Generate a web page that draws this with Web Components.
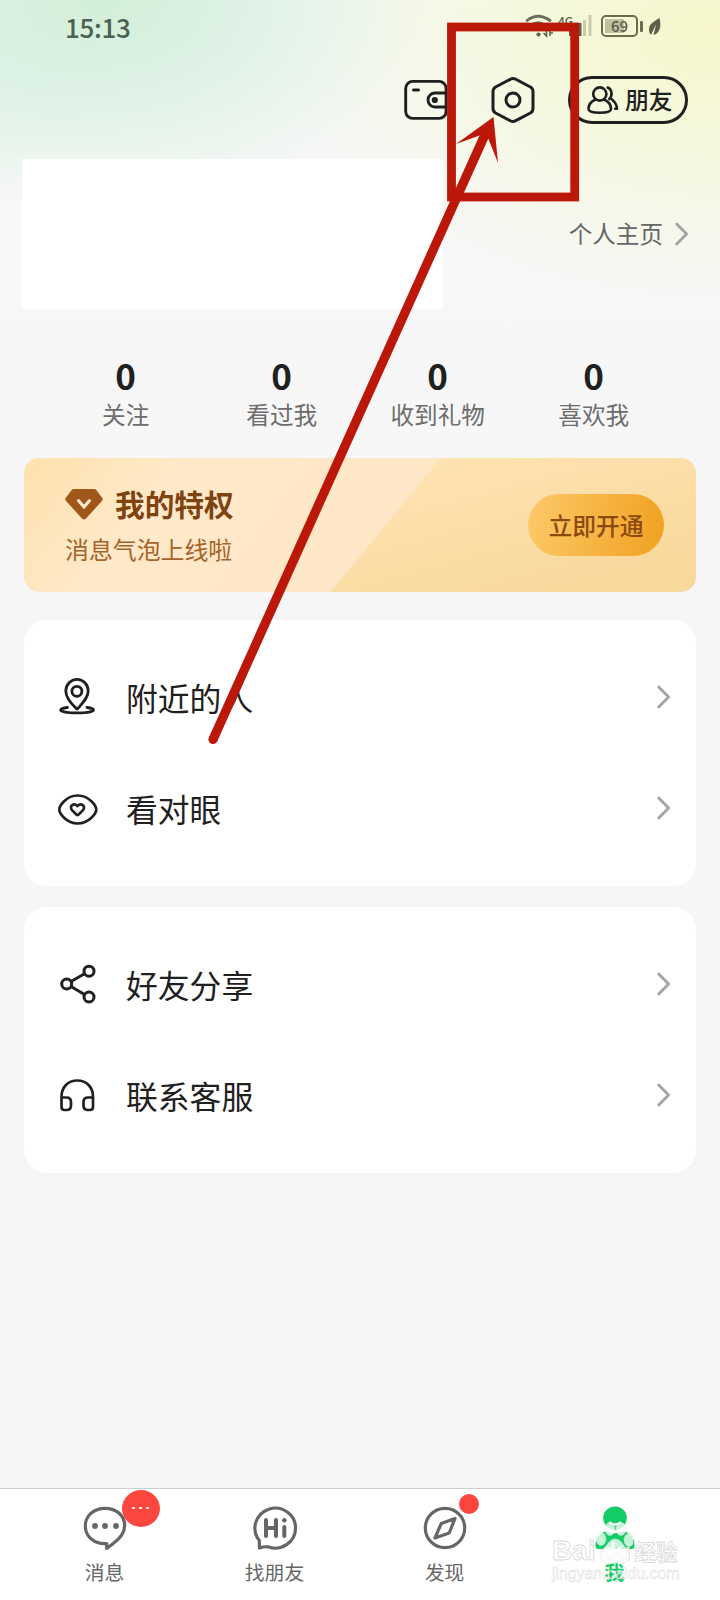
<!DOCTYPE html>
<html lang="zh-CN">
<head>
<meta charset="utf-8">
<title>我</title>
<style>
html,body{margin:0;padding:0}
body{width:720px;height:1600px;overflow:hidden;font-family:"Noto Sans CJK SC","Noto Sans",sans-serif;color:#1f2020}
</style>
</head>
<body>
<profile-page></profile-page>
<script>
const define=(name,html,setup)=>customElements.define(name,class extends HTMLElement{
  constructor(){
    super();
    const t=document.createElement('template');
    t.innerHTML=html;
    this.attachShadow({mode:'open'}).append(t.content.cloneNode(true));
  }
  connectedCallback(){ if(setup) setup(this,this.shadowRoot); }
});

const ICONS={
  wallet:[44,40,`<g fill="none" stroke="#1f2020" stroke-width="2.900" stroke-linejoin="round"><rect x="1.700" y="1.400" width="40.400" height="37" rx="7"/><path d="M42 13H31a7 7 0 0 0 0 14h11"/><path d="M9.500 10h5" stroke-width="3" stroke-linecap="round"/></g><circle cx="30.800" cy="20" r="3.100" fill="#1f2020"/>`],
  hex:[44,46,`<g fill="none" stroke="#1f2020" stroke-width="3" stroke-linejoin="round"><path d="M19.200 2.300q2.800-1.500 5.600 0L39.400 10q2.600 1.500 2.600 4.500v17q0 3-2.600 4.500l-14.600 7.700q-2.800 1.500-5.600 0L4.600 36Q2 34.500 2 31.500v-17Q2 11.500 4.600 10z"/><circle cx="22" cy="23" r="7"/></g>`],
  people:[32,28,`<g fill="none" stroke="#1f2020" stroke-width="2.600" stroke-linecap="round" stroke-linejoin="round"><ellipse cx="12.800" cy="8" rx="6.600" ry="6.600"/><path d="M8.500 13.500C4 15.500 1.500 19.500 1.500 23 1.500 26 6 26.700 12.800 26.700S24 26 24 23C24 19.500 21.600 15.500 17.100 13.500"/><path d="M20.700 1.500c4.600 2 5 8 1.600 11.500M25 13.500c2.800 2.500 5 5.500 5 9.200h-1.800"/></g>`],
  gem:[38,31,`<path d="M9 0h20q1.500 0 2.500 1.200L37.300 9q1 1.400-.2 2.800L21 29.600q-2 2-4 0L.9 11.800Q-.3 10.400.7 9L6.500 1.200Q7.500 0 9 0z" fill="#a2571a"/><path d="M13.700 11.800l5.300 6.200 5.300-6.200" fill="none" stroke="#ffeccc" stroke-width="3" stroke-linecap="square"/>`],
  pin:[40,40,`<g fill="none" stroke="#1f2020" stroke-width="2.800" stroke-linecap="round" stroke-linejoin="round"><path d="M18.300 30.600C12 24.500 7.800 19.500 7.800 13a10.700 11.200 0 0 1 22.400 0C30.200 19.500 25 24.500 19.800 30.600q-.7.700-1.500 0z"/><circle cx="18.900" cy="13.300" r="5"/><path d="M9.500 29.500C5 30 2.700 31 2.700 32c0 1.500 6.500 2.900 16.300 2.900S35.500 33.500 35.500 32c0-1-2.300-2-6.500-2.500"/></g>`],
  eye:[40,40,`<g fill="none" stroke="#1f2020" stroke-width="2.700" stroke-linejoin="round"><path d="M1.300 20.500C1.300 17 8 6.500 19.700 6.500S38.300 17 38.300 20.500C38.300 24 31.500 34.500 19.700 34.500S1.300 24 1.300 20.500z"/><path d="M18.600 25.700l-4.600-4.600c-3.200-4 2-7.700 5.500-4 3.500-3.700 8.700 0 5.500 4l-4.600 4.600q-.9.700-1.800 0z"/></g>`],
  share:[40,40,`<g fill="none" stroke="#1f2020" stroke-width="3"><circle cx="8.700" cy="19" r="5"/><circle cx="31" cy="6.200" r="5"/><circle cx="31" cy="32" r="5"/><path d="M13 16.500L26.500 8.700M13 21.500L26.500 29.500"/></g>`],
  phones:[40,40,`<g fill="none" stroke="#1f2020" stroke-width="2.700" stroke-linecap="round" stroke-linejoin="round"><path d="M3.500 31V21C3.500 11 10 4.500 19.300 4.500S35 11 35 21v10q0 3-3 3H30q-4.500 0-4.500-4.500V26q0-4.500 4.500-4.500h5M3.500 21.500H8.500q4.500 0 4.500 4.500v3.500q0 4.500-4.500 4.500H6.500q-3 0-3-3"/></g>`],
  chat:[46,46,`<path d="M23 3.300c11.500 0 19.700 7.400 19.700 17.200 0 8.400-5.700 13.800-11.700 18.300-2.800 2.200-5 3.700-6.300 4.500v-4.800C13 39.500 3.300 32 3.300 21 3.300 11 11.500 3.300 23 3.300z" fill="none" stroke="#666" stroke-width="3.200" stroke-linejoin="round"/><g fill="#666"><circle cx="13" cy="21" r="2.900"/><circle cx="23" cy="21" r="2.900"/><circle cx="34" cy="21" r="2.900"/></g>`],
  hi:[46,46,`<path d="M7.300 35.500A20.300 20 0 1 1 16 41.800Q12 41.500 7.500 43z" fill="none" stroke="#666" stroke-width="3.200" stroke-linejoin="round"/><path d="M14 15v16M24 15v16M14 23H24M32.300 22v9" stroke="#666" stroke-width="4" stroke-linecap="round"/><circle cx="32.300" cy="15.300" r="2.300" fill="#666"/>`],
  compass:[46,46,`<g fill="none" stroke="#666" stroke-width="3.200" stroke-linejoin="round"><circle cx="23" cy="23" r="19.700"/><path d="M33 13.500L19.200 18.600 13 33 27.200 28z"/></g>`],
  me:[46,46,`<g fill="#12cd66"><circle cx="23" cy="13.200" r="11.800"/><path d="M3.500 41C3.500 33 7.500 27.500 14.500 26.300q8.500 4 17 0C38.500 27.500 42.500 33 42.500 41q0 3-3 3H6.500q-3 0-3-3z"/></g><path d="M18 17.500q5 4 10 0" stroke="#fff" stroke-width="2.200" stroke-linecap="round" fill="none"/>`],
  chev:[14,24,`<path d="M1.700 1.900L11.600 12 1.700 22.100" fill="none" stroke="#a3a3a3" stroke-width="2.800" stroke-linecap="round" stroke-linejoin="round"/>`]
};
define('app-icon',`<style>:host{display:block;flex:none;line-height:0}svg{display:block;overflow:visible}</style>`,(el,root)=>{
  const [w,h,p]=ICONS[el.getAttribute('name')];
  const t=document.createElement('template');
  t.innerHTML=`<svg width="${w}" height="${h}" viewBox="0 0 ${w} ${h}">${p}</svg>`;
  root.append(t.content);
});

define('status-bar',`<style>
:host{display:flex;justify-content:space-between;box-sizing:border-box;height:54px;padding:0 59px 0 65px}
time{font-size:26px;font-weight:500;line-height:53px;letter-spacing:-.3px;color:#4c6152}
.sys{display:flex;gap:9px;padding-top:15px;height:22px}
svg{display:block;overflow:visible}
.bat{box-sizing:border-box;width:37px;height:22px;border:2px solid #6b6d53;border-radius:5px;font-size:15px;line-height:18px;text-align:center;color:#57594a;font-weight:500;background:linear-gradient(#bfc19f,#bfc19f) 2px 2px/19px 14px no-repeat;position:relative}
.bat::after{content:"";position:absolute;left:37px;top:4px;width:2.500px;height:11px;background:#6b6d53;border-radius:1px}
.net{font-size:12px;line-height:11px;font-weight:500;color:#5e604d;align-self:flex-start;margin-left:-5px;width:14px}
.bars{margin-left:-12px}
</style>
<time>15:13</time>
<div class="sys">
<svg width="29" height="22"><g fill="none" stroke="#6b6d5a" stroke-width="2.800" stroke-linecap="round"><path d="M2 5.500Q13 -3 25 5.500M6 10.500Q13 5 20 10.500"/></g><circle cx="13.500" cy="19.500" r="2.100" fill="#5e604d"/><path d="M21.500 15v6l-3-3M25 21v-6M25 18h3" stroke="#5e604d" stroke-width="1.600" fill="none"/></svg>
<span class="net">4G</span>
<svg class="bars" width="23" height="22"><g fill="#5e604d"><rect x="0" y="16" width="3" height="5"/><rect x="4.500" y="12" width="3" height="9"/><rect x="9" y="8" width="3.500" height="13"/></g><g fill="#c9cbab"><rect x="14" y="5" width="3" height="16"/><rect x="19.500" y="0" width="3" height="21"/></g></svg>
<div class="bat">69</div>
<svg width="12" height="18" style="margin:3px 0 0 2px"><path d="M10.500 0C2 5 0 7 0 12q0 3 2 5L7 6.500 4.500 17C10 16 13 9 10.500 0z" fill="#5e604d"/></svg>
</div>`);

define('top-actions',`<style>
:host{display:flex;align-items:center;justify-content:flex-end;height:92px;padding-right:32px}
app-icon.w{margin-right:43px}app-icon.h{margin-right:33px}
.pill{box-sizing:border-box;width:120px;height:48px;border:3px solid #1f2020;border-radius:24px;display:flex;align-items:center;gap:6px;padding-left:16px;font-size:23.800px;font-weight:500;line-height:42px}
.pill span{margin-top:-2px}
</style><app-icon class="w" name="wallet"></app-icon><app-icon class="h" name="hex"></app-icon><div class="pill"><app-icon name="people"></app-icon><span>朋友</span></div>`);

define('user-panel',`<style>
:host{display:flex;justify-content:space-between;padding:12.500px 31px 0 22px;height:150.500px}
.blank{width:421px;height:150.500px;background:#fff}
.link{display:flex;gap:12px;align-items:center;height:151px;font-size:23.600px;color:#666;line-height:30px}
.link span{margin-top:-2px}
</style><div class="blank"></div><div class="link"><span>个人主页</span><app-icon name="chev"></app-icon></div>`);

define('stat-item',`<style>
:host{display:flex;flex-direction:column;align-items:center;width:156px}
b{font-size:35px;line-height:40px}span{font-size:23.600px;line-height:30px;color:#6d6d6d;margin-top:4px}
</style><b><slot name="n"></slot></b><span><slot></slot></span>`);

define('vip-banner',`<style>
:host{display:flex;box-sizing:border-box;align-items:center;justify-content:space-between;margin:0 24px;height:134px;border-radius:15px;padding:0 32px 0 41px;
background:linear-gradient(129.500deg,#fde2ad 0,#ffe9ca 22%,#fee7c7 53.100%,transparent 53.500%),linear-gradient(165deg,#fee4b4 20%,#fde0ad 50%,#f8d89b 90%)}
.t{display:flex;align-items:center;gap:12px;font-size:29.700px;font-weight:700;color:#7e430f;line-height:40px}
.s{font-size:23.900px;line-height:34px;color:#a56329;margin-top:8px}
.go{width:136px;height:62px;border-radius:31px;text-align:center;font-size:23.800px;font-weight:500;line-height:62px;color:#8c4a10;background:linear-gradient(100deg,#fdc969,#f0a120)}
</style><div><div class="t"><app-icon name="gem"></app-icon><span>我的特权</span></div><div class="s">消息气泡上线啦</div></div><div class="go">立即开通</div>`);

define('menu-card',`<style>:host{display:block;margin:0 24px;background:#fff;border-radius:23px;padding:22px 0}</style><slot></slot>`);
define('menu-row',`<style>
:host{display:flex;align-items:center;height:111px;padding:0 24px 0 34px;font-size:31.800px;line-height:44px}
.l{flex:1;margin:-1px 0 0 28px}
app-icon{margin:-1px 1px 0 0}
</style><slot name="icon"></slot><span class="l"><slot></slot></span><app-icon name="chev"></app-icon>`);

define('tab-item',`<style>
:host{display:flex;flex-direction:column;align-items:center;width:170px;padding-top:16px;font-size:19.800px;line-height:28px;color:#666}
:host([active]){color:#12cd66;font-weight:700}
.i{position:relative}.l{margin-top:7px}
::slotted([slot=badge]){position:absolute}
</style><div class="i"><slot name="icon"></slot><slot name="badge"></slot></div><span class="l"><slot></slot></span>`);
define('tab-badge',`<style>
:host{display:flex;align-items:center;justify-content:center;gap:4px;background:#fd463e;border-radius:50%}
i{width:2.800px;height:2.800px;border-radius:50%;background:#fff}
:host([dot]) i{display:none}
:host([dot]){width:20px;height:20px;left:37.500px;top:-11px}
:host(:not([dot])){width:38px;height:37px;left:40px;top:-15.500px}
</style><i></i><i></i><i></i>`);
define('tab-bar',`<style>:host{display:flex;box-sizing:border-box;height:112px;border-top:1px solid #cfcfcf;background:#fff;padding-left:19.500px}</style><slot></slot>`);

define('water-mark',`<style>
:host{position:absolute;left:552px;top:1517px;width:130px;height:70px;color:rgba(255,255,255,.8);font-family:"Liberation Sans","Noto Sans CJK SC",sans-serif}
.a{display:flex;align-items:baseline;height:44px;padding-top:12px;font-weight:700;font-size:28px;line-height:44px;box-sizing:border-box;-webkit-text-stroke:.8px rgba(190,190,190,.6)}
.a .d{font-size:24px;width:32px;margin-left:6px}.a .k{font:700 21.500px/44px "Noto Sans CJK SC",sans-serif;margin-left:1px}
.b{font-size:15.800px;line-height:18px;-webkit-text-stroke:.5px rgba(180,180,180,.5);white-space:nowrap;margin-top:4px}
svg{position:absolute;left:43px;top:3px}
</style>
<svg width="38" height="44"><g fill="#fff" fill-opacity=".75" stroke="#ddd" stroke-opacity=".5"><ellipse cx="6" cy="19" rx="5" ry="6.500"/><ellipse cx="15" cy="9" rx="5" ry="6.500"/><ellipse cx="26" cy="9" rx="5" ry="6.500"/><ellipse cx="34" cy="20" rx="5" ry="6.500"/><path d="M20 19c5 0 7 4 10 8 8 9 4 17-3 16-5-1-9-1-14 0-7 1-11-7-3-16 4-4 5-8 10-8z"/></g></svg>
<div class="a"><span>Bai</span><span class="d">du</span><span class="k">经验</span></div><div class="b">jingyan.baidu.com</div>`);

define('guide-arrow',`<style>:host{position:absolute;left:0;top:0;width:720px;height:800px}svg{display:block}</style>
<svg width="720" height="800"><rect x="451.500" y="27" width="123.200" height="170" fill="none" stroke="#bb180a" stroke-width="8.800"/><circle cx="213" cy="739.500" r="4.600" fill="#bb180a"/><path d="M213 739.500L485.500 133.500" stroke="#bb180a" stroke-width="9.200"/><path d="M493.500 117L456 144 479.500 135.500 488.500 139 498 163z" fill="#bb180a"/></svg>`);

define('profile-page',`<style>
:host{display:flex;flex-direction:column;position:relative;width:720px;height:1600px;overflow:hidden;
background:radial-gradient(ellipse 330px 210px at 100px 0,rgba(211,239,216,1) 0,rgba(216,241,226,.8) 45%,rgba(247,247,247,0) 100%),radial-gradient(ellipse 120px 130px at 0 50px,rgba(214,240,232,.4),transparent),radial-gradient(ellipse 420px 270px at 710px 30px,#f7f7cb 0,rgba(245,248,214,.8) 38%,rgba(247,247,247,0) 100%),linear-gradient(#f7f8f5 0,#f7f7f7 320px,#f5f5f5 1200px)}
.stats{display:flex;padding-left:47.700px;margin-top:46px;height:103px}
menu-card.x{margin-top:28px}menu-card.y{margin-top:21px}
tab-bar{margin-top:auto}
</style>
<status-bar></status-bar><top-actions></top-actions><user-panel></user-panel>
<div class="stats"><stat-item><span slot="n">0</span>关注</stat-item><stat-item><span slot="n">0</span>看过我</stat-item><stat-item><span slot="n">0</span>收到礼物</stat-item><stat-item><span slot="n">0</span>喜欢我</stat-item></div>
<vip-banner></vip-banner>
<menu-card class="x"><menu-row><app-icon slot="icon" name="pin"></app-icon>附近的人</menu-row><menu-row><app-icon slot="icon" name="eye"></app-icon>看对眼</menu-row></menu-card>
<menu-card class="y"><menu-row><app-icon slot="icon" name="share"></app-icon>好友分享</menu-row><menu-row><app-icon slot="icon" name="phones"></app-icon>联系客服</menu-row></menu-card>
<tab-bar>
<tab-item><app-icon slot="icon" name="chat"></app-icon><tab-badge slot="badge"></tab-badge>消息</tab-item>
<tab-item><app-icon slot="icon" name="hi"></app-icon>找朋友</tab-item>
<tab-item><app-icon slot="icon" name="compass"></app-icon><tab-badge slot="badge" dot></tab-badge>发现</tab-item>
<tab-item active><app-icon slot="icon" name="me"></app-icon>我</tab-item>
</tab-bar>
<water-mark></water-mark><guide-arrow></guide-arrow>`);
</script>
</body>
</html>
